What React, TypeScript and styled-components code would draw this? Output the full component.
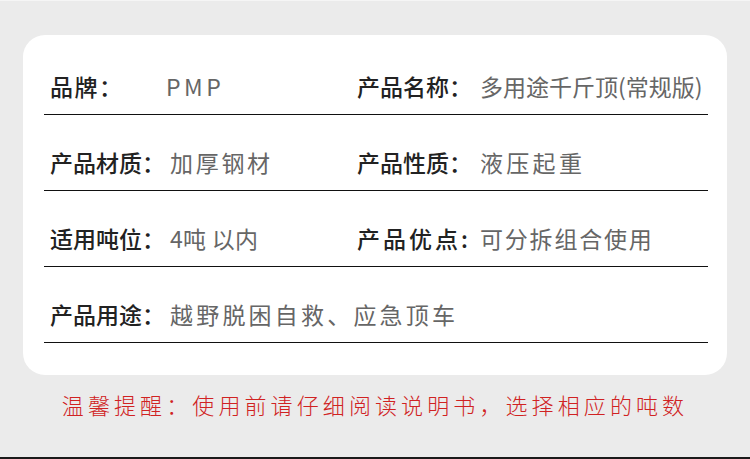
import React from 'react'
import styled, { createGlobalStyle } from 'styled-components'

const GlobalStyle = createGlobalStyle`
  html, body {
    margin: 0;
    padding: 0;
    background: #ebebeb;
  }
  body {
    font-family: 'Noto Sans CJK SC', 'Noto Sans', sans-serif;
  }
`

const StyledPage = styled.div`
  width: 750px;
  height: 459px;
  box-sizing: border-box;
  background: #ebebeb;
  border-top: 1px solid #f5f5f5;
  border-bottom: 2px solid #1a1a1a;
  padding-top: 34px;
  display: flex;
  flex-direction: column;
  align-items: center;
  overflow: hidden;
`

const Card = styled.div`
  width: 704px;
  box-sizing: border-box;
  background: #ffffff;
  border-radius: 22px;
  padding: 4px 19px 32px 21px;
`

const Row = styled.div`
  display: grid;
  grid-template-columns: 307px 1fr;
  padding: 34px 0 15px 6px;
  border-bottom: 1px solid #111;
`

const Cell = styled.div<{ $full?: boolean; $labelWidth: number }>`
  display: grid;
  grid-template-columns: ${p => p.$labelWidth}px 1fr;
  grid-column: ${p => (p.$full ? '1 / span 2' : 'auto')};
  align-items: center;
  height: 26px;
  line-height: 26px;
  white-space: nowrap;
`

const Label = styled.span<{ $spacing?: number }>`
  font-size: 23px;
  font-weight: 500;
  color: #222;
  letter-spacing: ${p => p.$spacing ?? 0}px;
`

const Value = styled.span<{ $spacing?: number }>`
  font-size: 23px;
  font-weight: 400;
  color: #666;
  letter-spacing: ${p => p.$spacing ?? 3}px;
`

const Notice = styled.p`
  margin: 14px 0 0;
  font-size: 22px;
  line-height: 30px;
  letter-spacing: 4.1px;
  color: #d02222;
  font-weight: 300;
  white-space: nowrap;
`

interface SpecItem {
  label: string
  value: string
  labelWidth: number
  labelSpacing?: number
  valueSpacing?: number
}

const rows: SpecItem[][] = [
  [
    { label: '品牌：', value: 'PMP', labelWidth: 116, labelSpacing: 1.5, valueSpacing: 3.5 },
    { label: '产品名称：', value: '多用途千斤顶(常规版)', labelWidth: 123, valueSpacing: 0 },
  ],
  [
    { label: '产品材质：', value: '加厚钢材', labelWidth: 120, valueSpacing: 2.7 },
    { label: '产品性质：', value: '液压起重', labelWidth: 123, valueSpacing: 3.3 },
  ],
  [
    { label: '适用吨位：', value: '4吨 以内', labelWidth: 120, valueSpacing: 0.3 },
    { label: '产品优点:', value: '可分拆组合使用', labelWidth: 123, labelSpacing: 3, valueSpacing: 1.8 },
  ],
  [{ label: '产品用途：', value: '越野脱困自救、应急顶车', labelWidth: 120, valueSpacing: 3.2 }],
]

const App: React.FC = () => {
  return (
    <>
      <GlobalStyle />
      <StyledPage>
        <Card>
          {rows.map((r, idx) => (
            <Row key={idx}>
              {r.map(item => (
                <Cell key={item.label} $full={r.length === 1} $labelWidth={item.labelWidth}>
                  <Label $spacing={item.labelSpacing}>{item.label}</Label>
                  <Value $spacing={item.valueSpacing}>{item.value}</Value>
                </Cell>
              ))}
            </Row>
          ))}
        </Card>
        <Notice>温馨提醒：使用前请仔细阅读说明书，选择相应的吨数</Notice>
      </StyledPage>
    </>
  )
}

export default App
